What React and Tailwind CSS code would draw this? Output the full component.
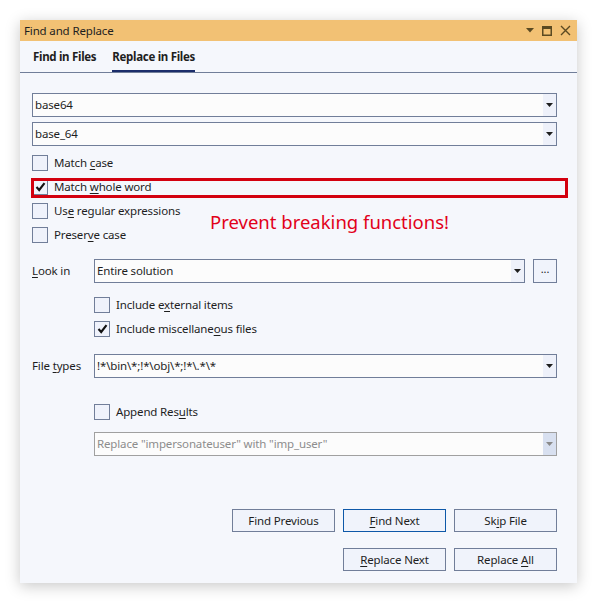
import React from 'react';

const font = { fontFamily: '"Noto Sans", "Open Sans", sans-serif' };

// letter with an access-key underline
const U = ({ children }) => <span className="underline underline-offset-2">{children}</span>;

function Arrow({ disabled }) {
    return (
        <svg width="7" height="4" viewBox="0 0 7 4">
            <path d="M0 0H7L3.5 4Z" fill={disabled ? '#8a8a8a' : '#1e1e1e'} />
        </svg>
    );
}

function Tick() {
    return (
        <svg width="11" height="10" viewBox="0 0 11 10">
            <path d="M1.5 5L4.2 8L9.5 1.2" fill="none" stroke="#111" strokeWidth="2.1" strokeLinejoin="miter" />
        </svg>
    );
}

function Combo({ value, disabled, className = '' }) {
    return (
        <div className={`flex h-[24px] items-stretch border bg-[#fcfcfc] ${disabled ? 'border-[#a0a0a0]' : 'border-[#717e99]'} ${className}`}>
            <div className={`flex-1 overflow-hidden whitespace-nowrap pl-[2px] leading-[22px] ${disabled ? 'text-[#8d8d8d]' : 'text-[#1e1e1e]'}`}>
                {value}
            </div>
            <div className={`flex w-[13px] items-center justify-center ${disabled ? 'bg-[#d8e0f0]' : 'bg-[#eef1fa]'}`}>
                <Arrow disabled={disabled} />
            </div>
        </div>
    );
}

function Check({ checked, children }) {
    return (
        <div className="flex h-[24px] items-center">
            <div className="flex h-[16px] w-[16px] items-center justify-center border border-[#717e99] bg-[#eff2fb]">
                {checked && <Tick />}
            </div>
            <span className="ml-[6px] text-[#1e1e1e]">{children}</span>
        </div>
    );
}

function Btn({ children, primary }) {
    return (
        <button className={`h-[23px] w-[103px] border bg-[#f0f3fb] text-[#1e1e1e] ${primary ? 'border-[#0e58a8]' : 'border-[#717e99]'}`}>
            {children}
        </button>
    );
}

export default function App() {
    return (
        <div className="h-[603px] w-[597px] bg-white pl-[20px] pt-[20px] text-[11.5px] tracking-[-0.15px]" style={font}>
            <div className="relative flex h-[563px] w-[557px] flex-col bg-[#f5f7fc] shadow-[0_3px_14px_rgba(0,0,0,0.22)]">
                {/* title bar */}
                <div className="flex h-[21px] items-center bg-[#f2c174] pl-[4px] pr-[6px] text-[#1e1e1e]">
                    <span className="flex-1">Find and Replace</span>
                    <div className="flex items-center gap-[8px]">
                        <svg width="8" height="5" viewBox="0 0 8 5"><path d="M0 0H8L4 4.5Z" fill="#5b4a22" /></svg>
                        <svg width="10" height="10" viewBox="0 0 10 10"><rect x="0.75" y="0.75" width="8.5" height="8.5" fill="none" stroke="#5b4a22" strokeWidth="1.5" /><rect x="0" y="0" width="10" height="3" fill="#5b4a22" /></svg>
                        <svg width="11" height="11" viewBox="0 0 11 11"><path d="M1 1L10 10M10 1L1 10" stroke="#5b4a22" strokeWidth="1.4" /></svg>
                    </div>
                </div>

                {/* tabs */}
                <div className="flex h-[32px] items-stretch border-b border-[#717e99] pl-[13px] font-bold tracking-[-0.3px] text-[#1e1e1e]">
                    <div className="flex items-end border-b-2 border-transparent pb-[5px] leading-[16px]">Find in Files</div>
                    <div className="ml-[16px] flex items-end border-b-2 border-[#1b2d6b] pb-[5px] leading-[16px]">Replace in Files</div>
                </div>

                {/* form */}
                <div className="flex flex-1 flex-col pl-[12px] pr-[20px] pt-[20px]">
                    <Combo value="base64" />
                    <Combo value="base_64" className="mt-[5px]" />

                    <div className="mt-[5px] flex flex-col">
                        <Check>Match <U>c</U>ase</Check>
                        <Check checked>Match <U>w</U>hole word</Check>
                        <Check>Us<U>e</U> regular expressions</Check>
                        <Check>Preser<U>v</U>e case</Check>
                    </div>

                    <div className="mt-[12px] flex items-center">
                        <span className="w-[62px] text-[#1e1e1e]"><U>L</U>ook in</span>
                        <Combo value="Entire solution" className="flex-1" />
                        <button className="ml-[8px] flex h-[24px] w-[24px] items-center justify-center border border-[#717e99] bg-[#f0f3fb] pb-[4px] text-[11px] text-[#1e1e1e]">...</button>
                    </div>

                    <div className="ml-[62px] mt-[10px] flex flex-col">
                        <Check>Include e<U>x</U>ternal items</Check>
                        <Check checked>Include miscellane<U>o</U>us files</Check>
                    </div>

                    <div className="mt-[13px] flex items-center">
                        <span className="w-[62px] text-[#1e1e1e]">File <U>t</U>ypes</span>
                        <Combo value={'!*\\bin\\*;!*\\obj\\*;!*\\.*\\*'} className="flex-1" />
                    </div>

                    <div className="ml-[62px] mt-[22px] flex flex-col">
                        <Check>Append Res<U>u</U>lts</Check>
                        <Combo disabled value={'Replace "impersonateuser" with "imp_user"'} className="mt-[8px]" />
                    </div>

                    <div className="mt-[53px] flex justify-end gap-[8px]">
                        <Btn>Find Previous</Btn>
                        <Btn primary><U>F</U>ind Next</Btn>
                        <Btn>Sk<U>i</U>p File</Btn>
                    </div>
                    <div className="mt-[16px] flex justify-end gap-[8px]">
                        <Btn><U>R</U>eplace Next</Btn>
                        <Btn>Replace <U>A</U>ll</Btn>
                    </div>
                </div>

                {/* annotation overlay */}
                <div className="absolute left-[11px] top-[158px] h-[20px] w-[537px] border-[3px] border-[#d3000f]" />
                <div className="absolute left-[190px] top-[188px] text-[18.5px] tracking-normal text-[#e2001a]">Prevent breaking functions!</div>
            </div>
        </div>
    );
}
